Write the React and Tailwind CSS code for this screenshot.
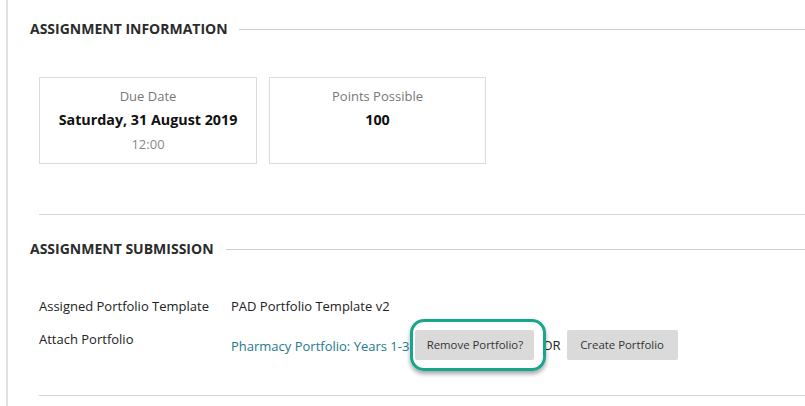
import React from 'react';

const font = { fontFamily: '"Open Sans", "Noto Sans", sans-serif' };

function SectionHeading({ children, gap }) {
  return (
    <div className="flex items-center">
      <h2 className="text-[14px] leading-[20px] font-bold uppercase text-[#2b2b2b] whitespace-nowrap">
        {children}
      </h2>
      <div className={`flex-1 h-px bg-[#cfcfcf] ${gap}`} />
    </div>
  );
}

function InfoCard({ label, value, sub, width }) {
  return (
    <div className={`${width} h-[87px] border border-[#dcdcdc] flex flex-col items-center pt-[6px]`}>
      <div className="text-[13px] leading-[24px] text-[#777]">{label}</div>
      <div className="text-[14.3px] leading-[24px] font-bold text-[#111]">{value}</div>
      {sub && <div className="text-[13px] leading-[24px] text-[#888]">{sub}</div>}
    </div>
  );
}

export default function App() {
  return (
    <div className="w-[805px] h-[406px] bg-white overflow-hidden" style={font}>
      <div className="ml-[6px] h-full border-l-2 border-[#e2e2e2] pl-[22px] pt-[19px]">
        <SectionHeading gap="ml-[11px]">Assignment Information</SectionHeading>

        <div className="ml-[9px] mt-[38px] flex gap-[12px]">
          <InfoCard width="w-[218px]" label="Due Date" value="Saturday, 31 August 2019" sub="12:00" />
          <InfoCard width="w-[217px]" label="Points Possible" value="100" />
        </div>

        <div className="ml-[9px] mt-[50px] h-px bg-[#d4d4d4]" />

        <div className="mt-[24px]">
          <SectionHeading gap="ml-[12px]">Assignment Submission</SectionHeading>
        </div>

        <div className="ml-[9px] mt-[38px] text-[13px] leading-[18px] text-[#222]">
          <div className="flex">
            <div className="w-[192px]">Assigned Portfolio Template</div>
            <div>PAD Portfolio Template v2</div>
          </div>
          <div className="flex items-start mt-[15px]">
            <div className="w-[192px]">Attach Portfolio</div>
            <div className="flex items-center h-[30px]">
              <span className="text-[#1d7a8c] mt-[1px]">Pharmacy Portfolio: Years 1-3</span>
              <div className="relative ml-[6px]">
                <button className="h-[30px] w-[119px] bg-[#dadada] text-[11.4px] text-[#333] rounded-[2px]">
                  Remove Portfolio?
                </button>
                <div className="absolute -left-[5px] -right-[12px] -top-[11px] -bottom-[11px] border-[3px] border-[#17a68a] rounded-[14px] shadow-[0_3px_4px_rgba(0,0,0,0.35)]" />
              </div>
              <span className="ml-[8px] text-[#222]">OR</span>
              <button className="ml-[6px] h-[30px] w-[111px] bg-[#dadada] text-[11.4px] text-[#333] rounded-[2px]">
                Create Portfolio
              </button>
            </div>
          </div>
        </div>

        <div className="ml-[9px] mt-[35px] h-px bg-[#d4d4d4]" />
      </div>
    </div>
  );
}
